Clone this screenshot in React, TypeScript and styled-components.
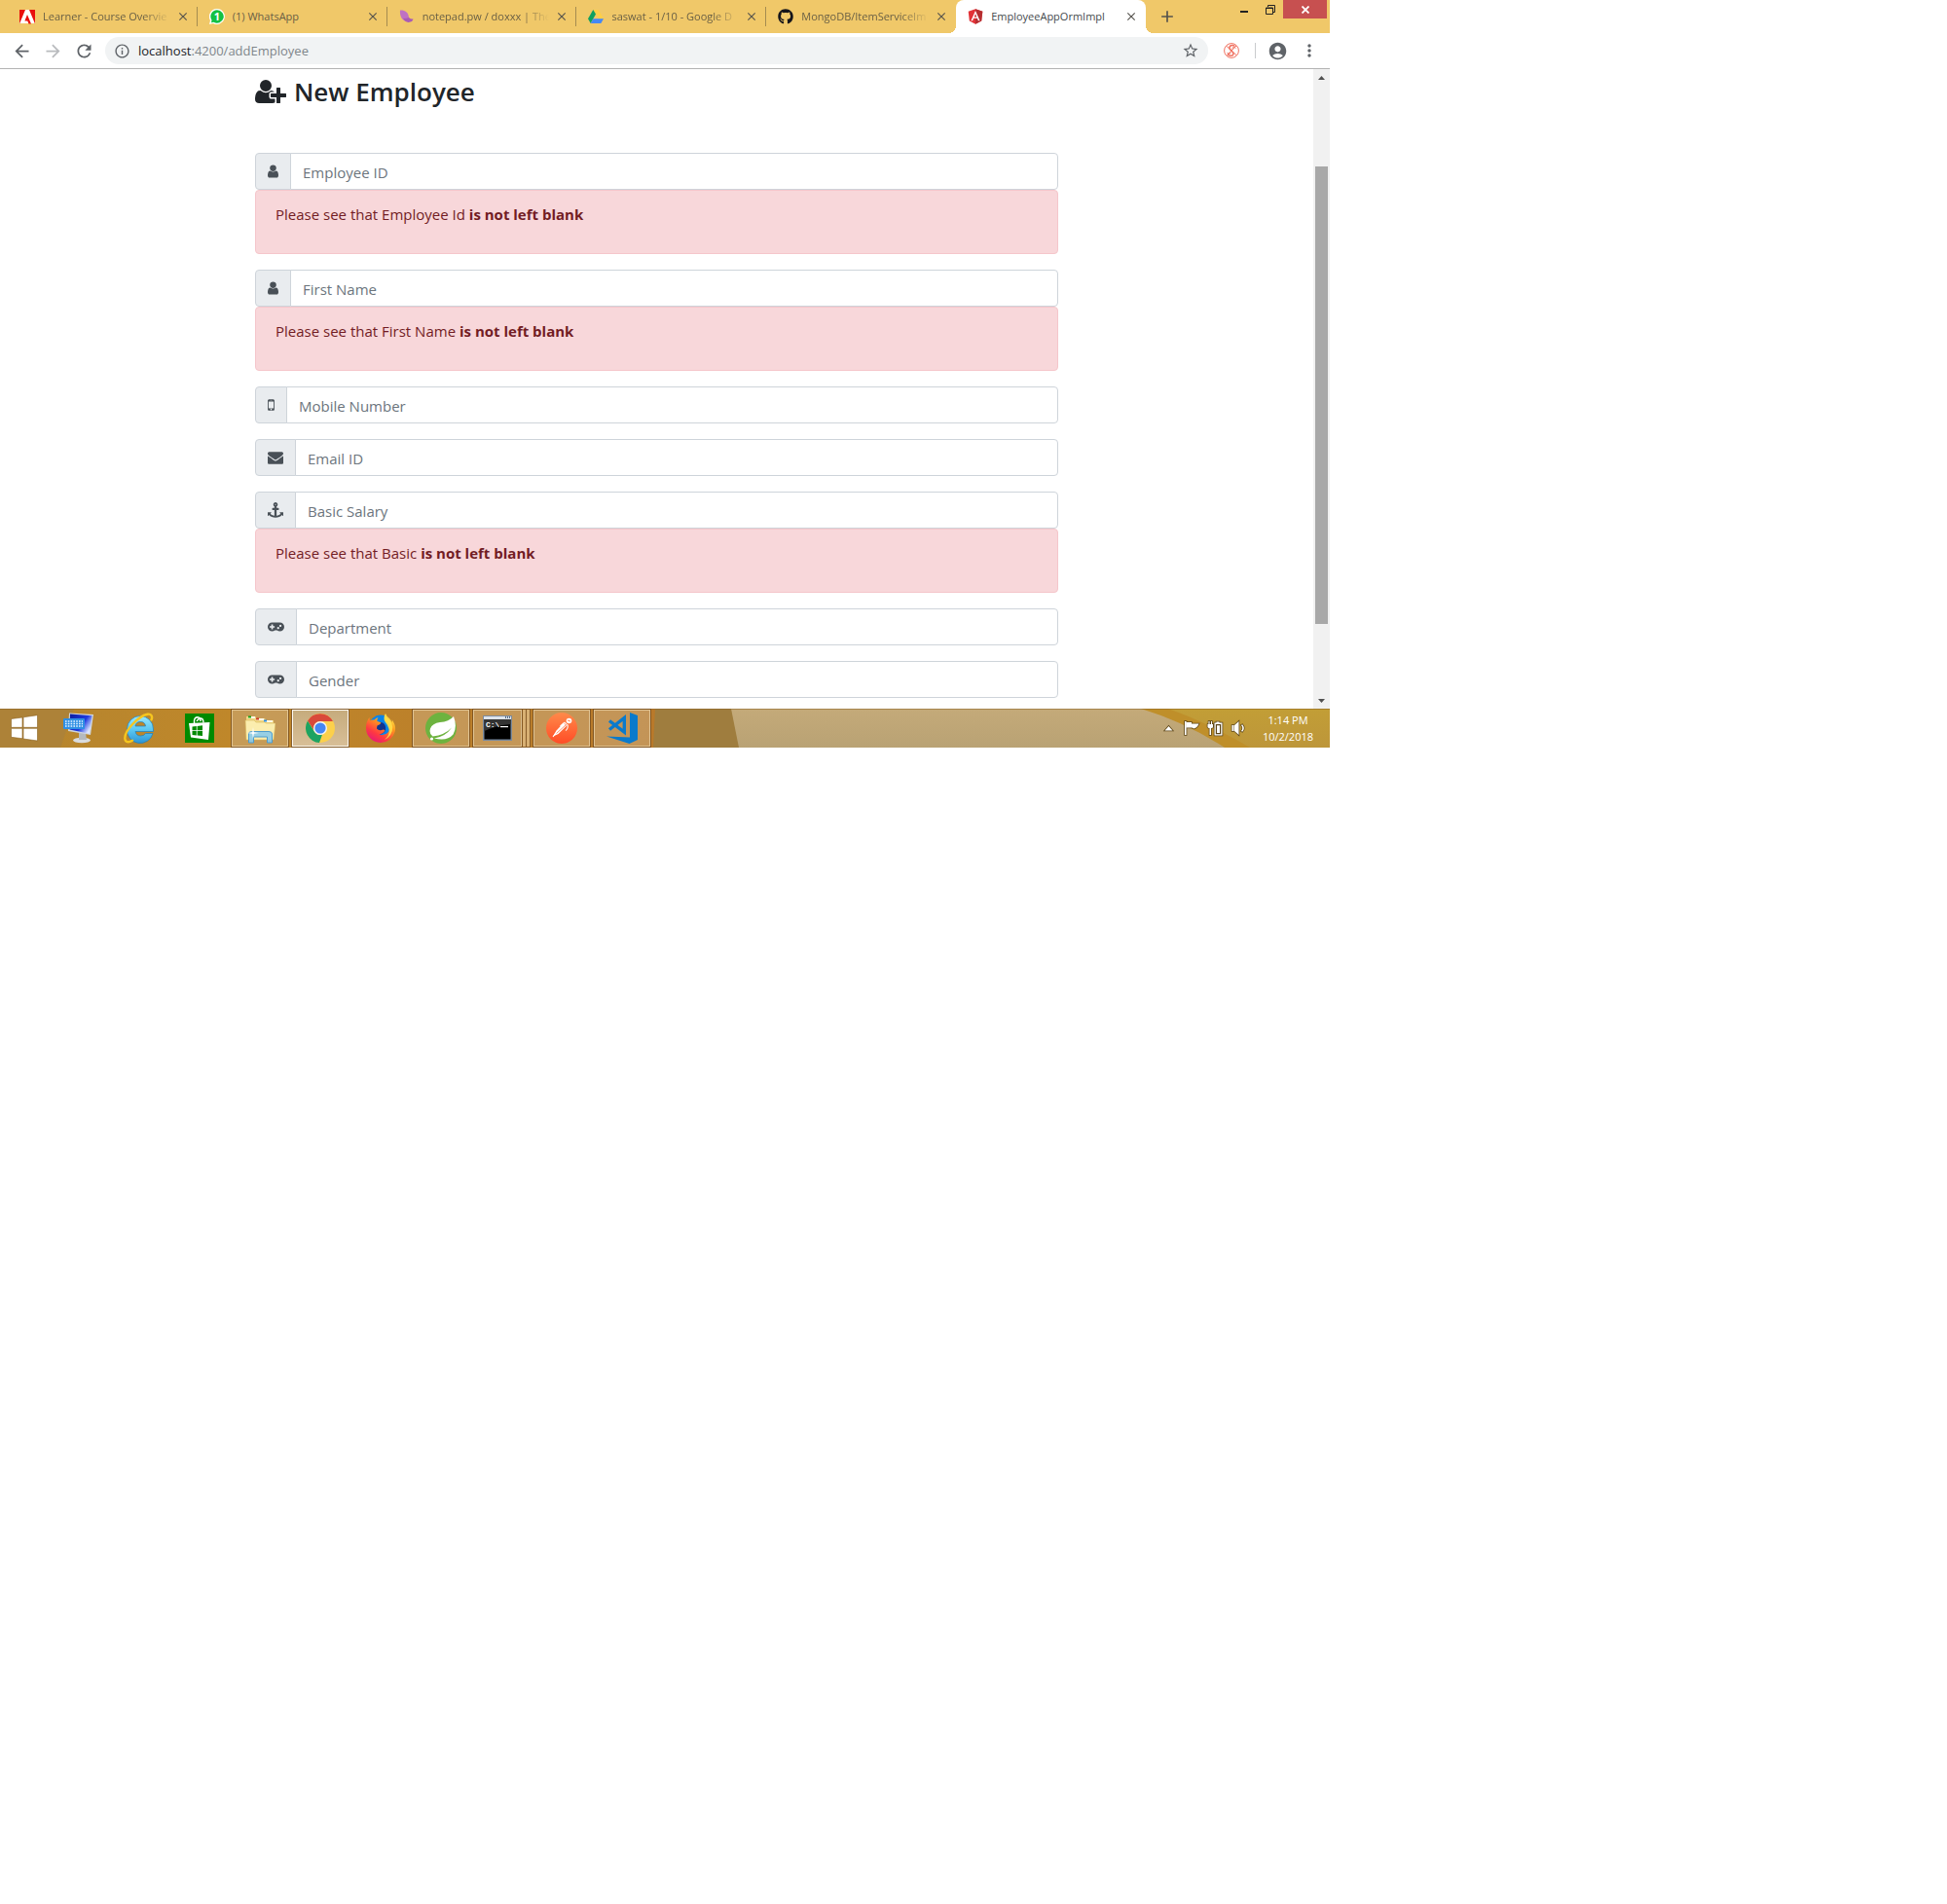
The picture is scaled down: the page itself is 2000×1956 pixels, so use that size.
import React from "react";
import styled, { createGlobalStyle, css } from "styled-components";
import { FaGithub } from "react-icons/fa";
import {
  MdAccountCircle,
  MdAdd,
  MdArrowBack,
  MdArrowForward,
  MdClose,
  MdInfoOutline,
  MdMoreVert,
  MdRefresh,
  MdStarBorder,
} from "react-icons/md";

const uiFont = `"Segoe UI", "Open Sans", "Noto Sans", sans-serif`;

const GlobalStyle = createGlobalStyle`
  *, *::before, *::after { box-sizing: border-box; }
  body { margin: 0; background: #fff; font-family: ${uiFont}; }
  button, input { font-family: inherit; margin: 0; }
  svg { display: block; flex: none; }
`;

const Desktop = styled.div`
  width: 100%;
  max-width: 1366px;
  overflow: hidden;
`;

const plainButton = css`
  display: flex;
  align-items: center;
  justify-content: center;
  padding: 0;
  border: 0;
  background: none;
  color: inherit;
`;

/* ---------- Tab strip ---------- */

const TabStrip = styled.div`
  display: flex;
  align-items: stretch;
  height: 34px;
  padding-left: 8px;
  background: #f0c869;
`;

const Tabs = styled.div`
  display: flex;
  flex: 0 1 1169px;
  min-width: 0;
`;

const Tab = styled.div<{ $active?: boolean; $divider?: boolean }>`
  position: relative;
  display: flex;
  align-items: center;
  flex: 1 1 0;
  min-width: 0;
  padding: 0 6px 0 12px;
  color: ${(p) => (p.$active ? "#45494d" : "#6a6045")};
  background: ${(p) => (p.$active ? "#fff" : "transparent")};
  border-radius: 8px 8px 0 0;

  ${(p) =>
    p.$divider &&
    css`
      &::after {
        content: "";
        position: absolute;
        right: 0;
        top: 7px;
        width: 1px;
        height: 20px;
        background: #a58c50;
      }
    `}

  ${(p) =>
    p.$active &&
    css`
      &::before,
      &::after {
        content: "";
        position: absolute;
        bottom: 0;
        width: 8px;
        height: 8px;
      }
      &::before {
        left: -8px;
        background: radial-gradient(circle at 0 0, transparent 8px, #fff 8px);
      }
      &::after {
        right: -8px;
        background: radial-gradient(circle at 100% 0, transparent 8px, #fff 8px);
      }
    `}
`;

const TabLabel = styled.button`
  ${plainButton}
  justify-content: flex-start;
  flex: 1;
  min-width: 0;
  gap: 8px;
  font-size: 11px;
  line-height: 16px;
`;

const TabTitle = styled.span<{ $fade?: boolean }>`
  flex: 1;
  min-width: 0;
  overflow: hidden;
  white-space: nowrap;
  text-align: left;
  ${(p) =>
    p.$fade &&
    css`
      mask-image: linear-gradient(to right, #000 calc(100% - 28px), transparent);
    `}
`;

const TabClose = styled.button`
  ${plainButton}
  width: 18px;
  height: 18px;
  margin-left: 4px;
  color: #55534d;
`;

const NewTab = styled.button`
  ${plainButton}
  width: 44px;
  color: #55534d;
`;

const WindowControls = styled.div`
  display: flex;
  align-items: flex-start;
  margin-left: auto;
  padding-right: 3px;
`;

const WindowButton = styled.button<{ $close?: boolean }>`
  ${plainButton}
  width: ${(p) => (p.$close ? 45 : 27)}px;
  height: 19px;
  color: ${(p) => (p.$close ? "#fff" : "#222")};
  background: ${(p) => (p.$close ? "#c75050" : "transparent")};
`;

/* ---------- Toolbar ---------- */

const Toolbar = styled.div`
  display: flex;
  align-items: center;
  height: 37px;
  padding: 0 11px 0 6px;
  border-bottom: 1px solid #b3b3b3;
  color: #5f6368;
`;

const ToolButton = styled.button<{ $faded?: boolean }>`
  ${plainButton}
  width: 32px;
  height: 28px;
  color: ${(p) => (p.$faded ? "#b9bbbe" : "#5f6368")};
`;

const AddressBar = styled.div`
  display: flex;
  align-items: center;
  flex: 1;
  min-width: 0;
  height: 28px;
  margin-left: 6px;
  padding: 0 9px 0 9px;
  gap: 8px;
  border-radius: 14px;
  background: #f1f3f4;
`;

const Url = styled.span`
  flex: 1;
  font-size: 13px;
  line-height: 20px;
  color: #80868b;
`;

const Host = styled.span`
  color: #202124;
`;

const SmallIconButton = styled.button`
  ${plainButton}
  color: #5f6368;
`;

const Extensions = styled.div`
  display: flex;
  align-items: center;
  gap: 12px;
  padding-left: 16px;
`;

const ToolDivider = styled.span`
  width: 1px;
  height: 16px;
  margin-left: 4px;
  background: #c9cbce;
`;

/* ---------- Page ---------- */

const Viewport = styled.div`
  display: flex;
  align-items: stretch;
`;

const Page = styled.main`
  flex: 1;
  min-width: 0;
  padding: 6px 16px 11px;
`;

const Form = styled.form`
  display: flex;
  flex-direction: column;
  gap: 16px;
  max-width: 825px;
  margin: 0 auto;
`;

const Heading = styled.h2`
  display: flex;
  align-items: center;
  gap: 8px;
  margin: 0 0 30px;
  color: #212529;
  font-size: 26px;
  font-weight: 600;
  line-height: 34px;
`;

const Field = styled.div`
  display: flex;
  flex-direction: column;
`;

const InputGroup = styled.div`
  display: flex;
  height: 38px;
`;

const Addon = styled.label`
  display: flex;
  align-items: center;
  padding: 0 12px;
  border: 1px solid #ced4da;
  border-radius: 4px 0 0 4px;
  background: #e9ecef;
  color: #495057;
`;

const TextInput = styled.input`
  flex: 1;
  min-width: 0;
  margin-left: -1px;
  padding: 7px 12px 5px;
  border: 1px solid #ced4da;
  border-radius: 0 4px 4px 0;
  background: #fff;
  color: #495057;
  font-size: 15px;
  line-height: 24px;

  &::placeholder {
    color: #6c757d;
    opacity: 1;
  }
`;

const Alert = styled.div`
  height: 66px;
  padding: 12px 20px;
  border: 1px solid #f5c6cb;
  border-radius: 4px;
  background: #f8d7da;
  color: #721c24;
  font-size: 15px;
  line-height: 24px;
`;

const Scrollbar = styled.div`
  display: flex;
  flex-direction: column;
  width: 17px;
  background: #f1f1f1;
  color: #505050;
`;

const ScrollArrow = styled.button`
  ${plainButton}
  height: 17px;
`;

const ScrollSpace = styled.span<{ $share: number }>`
  flex: ${(p) => p.$share} 1 0;
`;

const ScrollThumb = styled.span`
  flex: 470 1 0;
  margin: 0 2px;
  background: #a8a8a8;
`;

/* ---------- Taskbar ---------- */

const Taskbar = styled.footer`
  position: relative;
  display: flex;
  height: 40px;
  background: #bf8a2c;
`;

const Wallpaper = styled.svg`
  position: absolute;
  inset: 0;
  width: 100%;
  height: 100%;
`;

const Launchers = styled.div`
  position: relative;
  display: flex;
  gap: 2px;
`;

const StartButton = styled.button`
  ${plainButton}
  width: 49px;
`;

const AppButton = styled.button<{ $state?: "open" | "active" }>`
  ${plainButton}
  width: 60px;
  height: 40px;
  ${(p) =>
    p.$state &&
    css`
      border: 1px solid rgba(110, 66, 16, 0.75);
      background: ${p.$state === "active"
        ? "linear-gradient(#c5ab7c, #d8bf98)"
        : "rgba(206, 176, 132, 0.5)"};
      box-shadow: inset 0 0 0 1px
        ${p.$state === "active" ? "#fdfaf3" : "rgba(240, 220, 180, 0.65)"};
    `}
`;

const StackedApp = styled.div`
  display: flex;
  width: 60px;

  & > button {
    width: 52px;
  }
`;

const StackEdge = styled.span`
  width: 4px;
  border: 1px solid rgba(110, 66, 16, 0.75);
  border-left: 0;
  background: rgba(235, 210, 165, 0.6);
`;

const Tray = styled.div`
  position: relative;
  display: flex;
  align-items: center;
  margin-left: auto;
  padding-right: 15px;
`;

const TrayButton = styled.button`
  ${plainButton}
  width: 24px;
  height: 24px;
`;

const Clock = styled.time`
  display: flex;
  flex-direction: column;
  align-items: center;
  width: 56px;
  margin-left: 11px;
  color: #fff;
  font-size: 11px;
  line-height: 17px;
`;

/* ---------- Form icons ---------- */

const glyphs = {
  user: {
    box: "256 0 1280 1792",
    width: 11,
    d: "M1536 1399q0 109-62.5 187t-150.5 78h-854q-88 0-150.5-78t-62.5-187q0-85 8.5-160.5t31.5-152 58.5-131 94-89 134.5-34.5q131 128 313 128t313-128q76 0 134.5 34.5t94 89 58.5 131 31.5 152 8.5 160.5zm-256-887q0 159-112.5 271.5t-271.5 112.5-271.5-112.5-112.5-271.5 112.5-271.5 271.5-112.5 271.5 112.5 112.5 271.5z",
  },
  mobile: {
    box: "512 0 768 1792",
    width: 7,
    d: "M976 1408q0-33-23.5-56.5t-56.5-23.5-56.5 23.5-23.5 56.5 23.5 56.5 56.5 23.5 56.5-23.5 23.5-56.5zm208-160v-704q0-13-9.5-22.5t-22.5-9.5h-512q-13 0-22.5 9.5t-9.5 22.5v704q0 13 9.5 22.5t22.5 9.5h512q13 0 22.5-9.5t9.5-22.5zm-192-848q0-16-16-16h-160q-16 0-16 16t16 16h160q16 0 16-16zm288-16v1024q0 52-38 90t-90 38h-512q-52 0-90-38t-38-90v-1024q0-52 38-90t90-38h512q52 0 90 38t38 90z",
  },
  envelope: {
    box: "0 0 1792 1792",
    width: 16,
    d: "M1792 710v794q0 66-47 113t-113 47h-1472q-66 0-113-47t-47-113v-794q44 49 101 87 362 246 497 345 57 42 92.5 65.5t94.5 48 110 24.5h2q51 0 110-24.5t94.5-48 92.5-65.5q170-123 498-345 57-39 100-87zm0-294q0 79-49 151t-122 123q-376 261-468 325-10 7-42.5 31t-54 38.5-52 32.5-57.5 27-50 9h-2q-23 0-50-9t-57.5-27-52-32.5-54-38.5-42.5-31q-91-64-262-182.5t-205-142.5q-62-42-117-115.5t-55-136.5q0-78 41.5-130t118.5-52h1472q65 0 112.5 47t47.5 113z",
  },
  anchor: {
    box: "0 0 1792 1792",
    width: 16,
    d: "M960 256q0-26-19-45t-45-19-45 19-19 45 19 45 45 19 45-19 19-45zm832 928v352q0 22-20 30-8 2-12 2-12 0-23-9l-93-93q-119 143-318.5 226.5t-429.5 83.5-429.5-83.5-318.5-226.5l-93 93q-9 9-23 9-4 0-12-2-20-8-20-30v-352q0-14 9-23t23-9h352q22 0 30 20 8 19-7 35l-100 100q67 91 189.5 153.5t271.5 82.5v-647h-192q-26 0-45-19t-19-45v-128q0-26 19-45t45-19h192v-163q-58-34-93-92.5t-35-128.5q0-106 75-181t181-75 181 75 75 181q0 70-35 128.5t-93 92.5v163h192q26 0 45 19t19 45v128q0 26-19 45t-45 19h-192v647q149-20 271.5-82.5t189.5-153.5l-100-100q-15-16-7-35 8-20 30-20h352q14 0 23 9t9 23z",
  },
  gamepad: {
    box: "0 0 1920 1792",
    width: 17,
    d: "M512 384h896a512 512 0 0 1 0 1024q-190 0-330-128h-236q-140 128-330 128a512 512 0 0 1 0-1024zM416 608v192h-192v192h192v192h192v-192h192v-192h-192v-192zM1216 896a128 128 0 1 0 0.1 0zM1472 640a128 128 0 1 0 0.1 0z",
  },
};

type GlyphName = keyof typeof glyphs;

const Glyph = ({ name }: { name: GlyphName }) => (
  <svg width={glyphs[name].width} height={16} viewBox={glyphs[name].box} fill="currentColor" fillRule="evenodd" aria-hidden>
    <path d={glyphs[name].d} />
  </svg>
);

const UserPlusIcon = () => (
  <svg width={32} height={28} viewBox="0 0 2048 1792" fill="currentColor" aria-hidden>
    <path d="M704 896q-159 0-271.5-112.5t-112.5-271.5 112.5-271.5 271.5-112.5 271.5 112.5 112.5 271.5-112.5 271.5-271.5 112.5zm960 128h352q13 0 22.5 9.5t9.5 22.5v192q0 13-9.5 22.5t-22.5 9.5h-352v352q0 13-9.5 22.5t-22.5 9.5h-192q-13 0-22.5-9.5t-9.5-22.5v-352h-352q-13 0-22.5-9.5t-9.5-22.5v-192q0-13 9.5-22.5t22.5-9.5h352v-352q0-13 9.5-22.5t22.5-9.5h192q13 0 22.5 9.5t9.5 22.5v352zm-736 224q0 52 38 90t90 38h256v238q-68 50-171 50h-874q-121 0-194-69t-73-190q0-53 3.5-103.5t14-109 26.5-108.5 43-97.5 62-81 85.5-53.5 111.5-20q19 0 39 17 79 61 154.5 91.5t164.5 30.5 164.5-30.5 154.5-91.5q20-17 39-17 132 0 217 96h-223q-52 0-90 38t-38 90v192z" />
  </svg>
);

/* ---------- Favicons ---------- */

const AdobeIcon = () => (
  <svg width={16} height={16} viewBox="0 0 16 16">
    <path fill="#fff" d="M0 1h16v14H0z" />
    <path fill="#e90f0c" d="M0 1h6L0 15.500zM10 1h6v14.500zM8 6l4 9.500H9.500L8.300 12.500H5.400z" />
  </svg>
);

const WhatsAppIcon = () => (
  <svg width={16} height={16} viewBox="0 0 16 16">
    <path fill="#fff" d="M8 0a8 8 0 1 1-4 15L0 16l1-4A8 8 0 0 1 8 0z" />
    <path fill="#12c143" d="M8 1.300a6.700 6.700 0 1 1-3.500 12.400L2 14.200l.5-2.500A6.700 6.700 0 0 1 8 1.300z" />
    <text x="8" y="12" fill="#fff" fontSize="11" fontWeight="700" fontFamily="Open Sans, sans-serif" textAnchor="middle">1</text>
  </svg>
);

const NotepadIcon = () => (
  <svg width={16} height={16} viewBox="0 0 16 16">
    <path fill="#bf72c4" d="M1 1.500C5 1 9.500 3 10 9L7 13C2.500 11.500.5 7 1 1.500z" />
    <path fill="#a95bb5" d="M4 10q4 0 6-1 2 2 4.500 1.500-.5 3-5 3.500Q6 13.500 4 10z" />
  </svg>
);

const DriveIcon = () => (
  <svg width={16} height={16} viewBox="0 0 16 16">
    <path fill="#ffcf48" d="M5.300 1h5.400L16 10h-5.300z" />
    <path fill="#11a05f" d="M5.300 1L8 5.600 2.700 15 0 10.300z" />
    <path fill="#4688f4" d="M5.400 10.300H16L13.300 15H2.700z" />
  </svg>
);

const AngularIcon = () => (
  <svg width={16} height={16} viewBox="30 28 190 204">
    <path fill="#e23237" d="M125 30L31.900 63.200l14.200 123.100L125 230l78.900-43.700L218.100 63.200z" />
    <path fill="#b52e31" d="M125 30v200l78.900-43.700L218.100 63.200z" />
    <path fill="#fff" d="M125 52.100L66.800 182.600h21.700l11.700-29.200h49.400l11.700 29.200H183zM142 135.400h-34l17-40.900z" />
  </svg>
);

const ExtensionIcon = () => (
  <svg width={16} height={16} viewBox="0 0 16 16" fill="none" stroke="#f0705f">
    <circle cx="8" cy="8" r="7.400" />
    <path d="M11.500 3.500C9 1.500 5.500 3 6 5.500S10.500 9 10 11.500 6 13.800 4 12" strokeWidth="1.500" />
    <path d="M12.500 5.500C10 3 8 5 9.500 7M3.500 10C5.500 13 8 11 6.500 9M3 3.500l10 9M13 3L3.500 12.500" />
  </svg>
);

/* ---------- Taskbar icons ---------- */

const WindowsIcon = () => (
  <svg width={28} height={28} viewBox="0 0 28 28" fill="#fff" stroke="#8a5f1c" strokeWidth=".600">
    <path d="M.500 4.500L12 3v10.300H.500zM13 2.800L27.500.700v12.600H13zM.500 14.300H12v10.400L.500 23.300zM13 14.300h14.500V27L13 25z" />
  </svg>
);

const RemoteKeyboardIcon = () => (
  <svg width={32} height={32} viewBox="0 0 32 32">
    <defs>
      <linearGradient id="screen" x1="0" x2="1" y2=".600">
        <stop offset="0" stopColor="#0a1b9c" />
        <stop offset=".65" stopColor="#1f3be0" />
        <stop offset="1" stopColor="#dbe4ff" />
      </linearGradient>
    </defs>
    <ellipse cx="19" cy="28.500" rx="9" ry="2.800" fill="#d9dcdf" />
    <path fill="#b5babf" d="M16 21h7l1 7h-8z" />
    <path fill="#cfd5dc" d="M6 .500L31 2l-3 21L5 19z" />
    <path fill="url(#screen)" d="M7 1.500l22.500 1.700-2.700 18.600L6.500 17.500z" />
    <rect x="0" y="6" width="22" height="11" rx="1" fill="#2f8fe4" />
    <path stroke="#e7f4ff" strokeWidth="1.300" strokeDasharray="1.600 1.200" d="M2 9h18M2 11.500h18M2 14h18" />
  </svg>
);

const ExplorerIeIcon = () => (
  <svg width={32} height={32} viewBox="0 0 32 32">
    <defs>
      <linearGradient id="ie" x1="0" x2="0" y1="0" y2="1">
        <stop offset="0" stopColor="#9be8fd" />
        <stop offset=".5" stopColor="#5cc8f2" />
        <stop offset="1" stopColor="#2b95d6" />
      </linearGradient>
    </defs>
    <path
      d="M3.500 17A13.500 13.500 0 0 1 30.500 17v2.500H12q1 4.500 5.500 4.500 3.500 0 5-2.500h7.500A13.500 13.500 0 0 1 3.500 17zm8.500-3h10.500q-.5-4.500-5.200-4.500T12 14z"
      fill="url(#ie)"
      stroke="#1c7fbe"
      strokeWidth=".7"
      fillRule="evenodd"
    />
    <path d="M28.500 7.500c1.500-3.500 0-6.500-4-5.800C16 3.200 1 18 1.300 26.500c.2 4.500 4 4.500 7.700 2.200" fill="none" stroke="#f6c61f" strokeWidth="2.400" strokeLinecap="round" />
  </svg>
);

const StoreIcon = () => (
  <svg width={30} height={30} viewBox="0 0 30 30">
    <path fill="#008a00" d="M0 0h30v30H0z" />
    <path fill="none" stroke="#fff" strokeWidth="1.400" d="M9.500 10V7q.5-3 3.500-3.200Q16 4 16 8M12 8q2-3.500 4.500-3T19 9.500" />
    <path fill="#fff" d="M4 10l21.500-1-1.500 18L6 24.500z" />
    <path fill="#008a00" d="M7.500 13.500l4.300-.500v4.300H7.500zM12.600 12.900L18 12.300v5h-5.400zM7.500 18h4.300v4.400l-4.300-.500zM12.600 18H18v5l-5.400-.600z" />
  </svg>
);

const FoldersIcon = () => (
  <svg width={32} height={32} viewBox="0 0 32 32">
    <path fill="#efd683" d="M2 4h9l2 2h8l1 2h8v20H2z" />
    <path fill="#fffbe6" d="M4 4h7v2H4zM12 6h8v2h-8zM21 8h8v2h-8z" />
    <path fill="#19a319" d="M4 3.500h3v2H4z" />
    <path fill="#cf3b25" d="M12 5.500h3v2h-3z" />
    <path fill="#2f8fe0" d="M20 7.500h3v2h-3z" />
    <path fill="#fbedae" stroke="#d8b95c" strokeWidth=".600" d="M1 8h9l2 2h9l1 1h10L30 28H2z" />
    <path fill="#8ccbea" stroke="#4d9ccd" d="M4.500 31V22q0-2.500 3-2.500h17.500q3.500 0 3.500 2.500v9h-5v-6h-14v6z" fillOpacity=".9" />
    <path fill="#fff" d="M9 15l.8 5.200L15 21l-5.200.8L9 27l-.8-5.200L3 21l5.200-.8z" />
  </svg>
);

const ChromeIcon = () => (
  <svg width={30} height={30} viewBox="0 0 30 30">
    <circle cx="15" cy="15" r="15" fill="#fcd04b" />
    <path fill="#d9493b" d="M2 7.500A15 15 0 0 1 28 8H15a7 7 0 0 0-6.600 9z" />
    <path fill="#1da362" d="M2 7.500l6.900 11A7 7 0 0 0 17 21.700L14 30A15 15 0 0 1 2 7.500z" />
    <circle cx="15" cy="15" r="7" fill="#f4f4f4" />
    <circle cx="15" cy="15" r="5.600" fill="#4587f4" />
  </svg>
);

const FirefoxIcon = () => (
  <svg width={32} height={32} viewBox="0 0 32 32">
    <defs>
      <linearGradient id="fox" x1=".8" y1="0" x2=".2" y2="1">
        <stop offset="0" stopColor="#fff44f" />
        <stop offset=".35" stopColor="#ff9a1e" />
        <stop offset=".7" stopColor="#ff3a40" />
        <stop offset="1" stopColor="#e3157e" />
      </linearGradient>
    </defs>
    <circle cx="16" cy="14" r="11.500" fill="#0a84e8" />
    <path fill="#12348d" d="M10 12q4-4 9-1 4 4 1 9-5 5-10 1z" />
    <path fill="url(#fox)" d="M4.500 5q0 2 .5 3.500Q7 7 9.500 7.500q1.500-2 4-2.500-1.500 2-1 4 3 .5 4 1.500-1 2-4 3-.5 2-.5 3 2 2.500 5 1.500 2.500-1 3.500.5-2 3.500-6 4 6 2 9.500-2.500 2.500-4-.5-8.500Q18 7 21 1q1 3 4 5l3 4q0-2-.5-3 5 7 3 13A15 15 0 0 1 16 31 15 15 0 0 1 1 16Q1 9 4.500 5z" />
    <path fill="#ffe24a" d="M20.500 1.500q0 3 4.500 6 6 7 1 15.500-3 4-6 5 6-5 4.500-11-1-4-4-7.500-2-3 0-8z" opacity=".85" />
  </svg>
);

const SpringIcon = () => (
  <svg width={32} height={32} viewBox="0 0 32 32">
    <circle cx="16" cy="16" r="16" fill="#6db33f" />
    <path fill="#fff" d="M29 4q4 11-.5 18.500Q22 30 9 26.500 21 24.500 27 15.500 20 23 7.500 24.500 3.500 22 5 16.500 7 11 15 10q9-.5 14-6z" />
    <circle cx="6.500" cy="27" r="1.600" fill="#fff" />
  </svg>
);

const ConsoleIcon = () => (
  <svg width={30} height={26} viewBox="0 0 30 26">
    <path fill="#7c8b9d" d="M0 0h30v26H0z" />
    <path fill="#dde3ea" d="M1 1h28v3H1z" />
    <path fill="#556a86" d="M23 1h1v2h-1zM25 1h1v2h-1zM27 1h1v2h-1z" />
    <path fill="#000" d="M1.500 4h27v20.500h-27z" />
    <path fill="#333" d="M1.500 4h27v5q-14 1-27 7z" />
    <text x="3" y="12" fill="#fff" fontSize="8" fontWeight="700" fontFamily="Liberation Mono, monospace">C:\</text>
    <path fill="#fff" d="M18 11h8v1.200h-8z" />
  </svg>
);

const PostmanIcon = () => (
  <svg width={32} height={32} viewBox="0 0 32 32">
    <defs>
      <linearGradient id="postman" x1="0" x2="0" y1="0" y2="1">
        <stop offset="0" stopColor="#ff8a4a" />
        <stop offset="1" stopColor="#ff4c26" />
      </linearGradient>
    </defs>
    <circle cx="16" cy="16" r="16" fill="url(#postman)" />
    <circle cx="23.500" cy="8.500" r="2.800" fill="#fff" />
    <path fill="#fff" d="M19 9.500l3 3-9.500 9.500L7 24.500l3.500-6z" />
    <path stroke="#ff7041" strokeWidth=".8" d="M20.500 12.500l-10 9M18 10.500l3 3M22 8l3 1" />
    <path fill="none" stroke="#fff" strokeWidth="1.100" d="M18.500 10.500l-4 3.500M22 12.500q1 4-2 6M10 21l-3 4" />
  </svg>
);

const CodeIcon = () => (
  <svg width={32} height={32} viewBox="0 0 32 32">
    <path fill="#0a7acc" d="M24 0l8 3v25l-8.500 4L0 24.500l24 1z" />
    <path fill="none" stroke="#0a7acc" strokeWidth="3.400" d="M3 8.500L18.300 20V5.500L3 17.500" />
  </svg>
);

const TrayIcon = ({ width, height = 16, d }: { width: number; height?: number; d: string }) => (
  <svg
    width={width}
    height={height}
    viewBox={`0 0 ${width} ${height}`}
    fill="#fff"
    stroke="#5c4618"
    strokeWidth="1.5"
    paintOrder="stroke"
    overflow="visible"
    fillRule="evenodd"
  >
    <path d={d} />
  </svg>
);

const tabs: { title: string; icon: React.ReactNode; active?: boolean; divider?: boolean; fade?: boolean }[] = [
  { title: "Learner - Course Overvie", icon: <AdobeIcon />, divider: true, fade: true },
  { title: "(1) WhatsApp", icon: <WhatsAppIcon />, divider: true },
  { title: "notepad.pw / doxxx | The", icon: <NotepadIcon />, divider: true, fade: true },
  { title: "saswat - 1/10 - Google D", icon: <DriveIcon />, divider: true, fade: true },
  { title: "MongoDB/ItemServiceIm", icon: <FaGithub size={16} color="#15151a" />, fade: true },
  { title: "EmployeeAppOrmImpl", icon: <AngularIcon />, active: true },
];

const fields: { id: string; label: string; glyph: GlyphName; missing?: string }[] = [
  { id: "employee-id", label: "Employee ID", glyph: "user", missing: "Employee Id" },
  { id: "first-name", label: "First Name", glyph: "user", missing: "First Name" },
  { id: "mobile", label: "Mobile Number", glyph: "mobile" },
  { id: "email", label: "Email ID", glyph: "envelope" },
  { id: "salary", label: "Basic Salary", glyph: "anchor", missing: "Basic" },
  { id: "department", label: "Department", glyph: "gamepad" },
  { id: "gender", label: "Gender", glyph: "gamepad" },
];

export default function App() {
  return (
    <Desktop>
      <GlobalStyle />
      <TabStrip>
        <Tabs>
          {tabs.map((tab) => (
            <Tab key={tab.title} $active={tab.active} $divider={tab.divider}>
              <TabLabel type="button">
                {tab.icon}
                <TabTitle $fade={tab.fade}>{tab.title}</TabTitle>
              </TabLabel>
              <TabClose type="button" aria-label={`Close ${tab.title}`}>
                <MdClose size={14} />
              </TabClose>
            </Tab>
          ))}
        </Tabs>
        <NewTab type="button" aria-label="New tab">
          <MdAdd size={20} />
        </NewTab>
        <WindowControls>
          <WindowButton type="button" aria-label="Minimize">
            <svg width={8} height={9} viewBox="0 0 8 9">
              <path fill="currentColor" d="M0 6h8v2H0z" />
            </svg>
          </WindowButton>
          <WindowButton type="button" aria-label="Restore">
            <svg width={10} height={10} viewBox="0 0 10 10" fill="none" stroke="currentColor">
              <path d="M2.500 2V.500h7v7H8" />
              <path d="M.500 3h7v6.500h-7zM0 3.500h8" />
            </svg>
          </WindowButton>
          <WindowButton type="button" $close aria-label="Close window">
            <svg width={8} height={8} viewBox="0 0 8 8" stroke="currentColor" strokeWidth={1.8}>
              <path d="M.500.500l7 7M7.500.500l-7 7" />
            </svg>
          </WindowButton>
        </WindowControls>
      </TabStrip>

      <Toolbar>
        <ToolButton type="button" aria-label="Back">
          <MdArrowBack size={21} />
        </ToolButton>
        <ToolButton type="button" $faded aria-label="Forward">
          <MdArrowForward size={21} />
        </ToolButton>
        <ToolButton type="button" aria-label="Reload">
          <MdRefresh size={21} />
        </ToolButton>
        <AddressBar>
          <SmallIconButton type="button" aria-label="Site information">
            <MdInfoOutline size={17} />
          </SmallIconButton>
          <Url>
            <Host>localhost</Host>:4200/addEmployee
          </Url>
          <SmallIconButton type="button" aria-label="Bookmark this page">
            <MdStarBorder size={18} />
          </SmallIconButton>
        </AddressBar>
        <Extensions>
          <SmallIconButton type="button" aria-label="Extension">
            <ExtensionIcon />
          </SmallIconButton>
          <ToolDivider />
          <SmallIconButton type="button" aria-label="Profile">
            <MdAccountCircle size={21} />
          </SmallIconButton>
          <SmallIconButton type="button" aria-label="Menu">
            <MdMoreVert size={20} />
          </SmallIconButton>
        </Extensions>
      </Toolbar>

      <Viewport>
        <Page>
          <Form>
            <Heading>
              <UserPlusIcon />
              New Employee
            </Heading>
            {fields.map((field) => (
              <Field key={field.id}>
                <InputGroup>
                  <Addon htmlFor={field.id} aria-label={field.label}>
                    <Glyph name={field.glyph} />
                  </Addon>
                  <TextInput id={field.id} type="text" placeholder={field.label} />
                </InputGroup>
                {field.missing && (
                  <Alert role="alert">
                    Please see that {field.missing} <strong>is not left blank</strong>
                  </Alert>
                )}
              </Field>
            ))}
          </Form>
        </Page>
        <Scrollbar>
          <ScrollArrow type="button" aria-label="Scroll up">
            <svg width={7} height={4} viewBox="0 0 7 4">
              <path fill="currentColor" d="M0 4L3.500 0 7 4z" />
            </svg>
          </ScrollArrow>
          <ScrollSpace $share={83} />
          <ScrollThumb />
          <ScrollSpace $share={70} />
          <ScrollArrow type="button" aria-label="Scroll down">
            <svg width={7} height={4} viewBox="0 0 7 4">
              <path fill="currentColor" d="M0 0h7L3.500 4z" />
            </svg>
          </ScrollArrow>
        </Scrollbar>
      </Viewport>

      <Taskbar>
        <Wallpaper viewBox="0 0 1366 40" preserveAspectRatio="none" aria-hidden>
          <defs>
            <linearGradient id="ground" x1="0" x2="1">
              <stop offset="0" stopColor="#b4852f" />
              <stop offset=".35" stopColor="#bf872a" />
              <stop offset="1" stopColor="#b9792a" />
            </linearGradient>
            <linearGradient id="sand" x1="0" x2="0" y1="0" y2="1">
              <stop offset="0" stopColor="#c4aa79" />
              <stop offset="1" stopColor="#b9a274" />
            </linearGradient>
            <linearGradient id="gold" x1="0" x2="0" y1="0" y2="1">
              <stop offset="0" stopColor="#c29e36" />
              <stop offset="1" stopColor="#bd963a" />
            </linearGradient>
          </defs>
          <path fill="url(#ground)" d="M0 0h674v40H0z" />
          <path fill="#ad8238" d="M0 0h76L62 40H0z" />
          <path fill="#9f7d3e" d="M673 0h90v40h-92z" />
          <path fill="url(#sand)" d="M751 0h615v40H759z" />
          <path fill="#bf8f2a" d="M1172 0h194v40h-108q-40-26-86-40z" />
          <path fill="url(#gold)" d="M1200 0h166v40h-82q-44-26-84-40z" />
          <path fill="#8a5f22" fillOpacity=".5" d="M0 0h1366v1H0z" />
        </Wallpaper>
        <Launchers>
          <StartButton type="button" aria-label="Start">
            <WindowsIcon />
          </StartButton>
          <AppButton type="button" aria-label="On-screen keyboard"><RemoteKeyboardIcon /></AppButton>
          <AppButton type="button" aria-label="Internet Explorer"><ExplorerIeIcon /></AppButton>
          <AppButton type="button" aria-label="Store"><StoreIcon /></AppButton>
          <AppButton type="button" $state="open" aria-label="File Explorer"><FoldersIcon /></AppButton>
          <AppButton type="button" $state="active" aria-label="Chrome"><ChromeIcon /></AppButton>
          <AppButton type="button" aria-label="Firefox"><FirefoxIcon /></AppButton>
          <AppButton type="button" $state="open" aria-label="Spring Tool Suite"><SpringIcon /></AppButton>
          <StackedApp>
            <AppButton type="button" $state="open" aria-label="Command Prompt"><ConsoleIcon /></AppButton>
            <StackEdge />
            <StackEdge />
          </StackedApp>
          <AppButton type="button" $state="open" aria-label="Postman"><PostmanIcon /></AppButton>
          <AppButton type="button" $state="open" aria-label="Visual Studio Code"><CodeIcon /></AppButton>
        </Launchers>
        <Tray>
          <TrayButton type="button" aria-label="Show hidden icons">
            <TrayIcon width={9} height={6} d="M.500 5.500h8L4.500 1z" />
          </TrayButton>
          <TrayButton type="button" aria-label="Action Center">
            <TrayIcon width={16} d="M1 1h1.600v14H1zM2.500 2h5.500v1.500h7.500q-1.500 4-5 5L8.500 7.500h-6z" />
          </TrayButton>
          <TrayButton type="button" aria-label="Battery">
            <TrayIcon width={16} d="M7.500 2.500h2v-1h3v1h3v13h-8zM8.800 4v10.200h5.400v-10.200zM1.500 1h1v3h1.500V1h1v3H6v3q0 1-2 1v7H2.500V8Q.500 8 .500 7V4h1zM10 5.200h3v7.800h-3z" />
          </TrayButton>
          <TrayButton type="button" aria-label="Volume">
            <TrayIcon width={14} d="M.500 5h2v6h-2zM3 5l4.500-4v14L3 11zM10 5q2.500 3 0 6l1.200.8Q14.500 8 11.200 4.200z" />
          </TrayButton>
          <Clock>
            <span>1:14 PM</span>
            <span>10/2/2018</span>
          </Clock>
        </Tray>
      </Taskbar>
    </Desktop>
  );
}
